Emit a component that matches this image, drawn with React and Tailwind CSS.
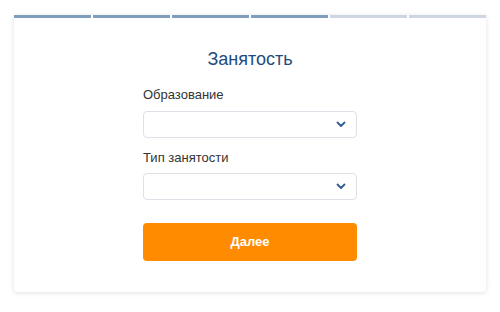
import React from "react";

const steps = [true, true, true, true, false, false];

const Chevron = () => (
  <svg width="10" height="7" viewBox="0 0 10 7" className="text-[#2d5d91]">
    <path d="M1.5 1.5 L5 5 L8.5 1.5" fill="none" stroke="currentColor" strokeWidth="1.8" strokeLinecap="round" strokeLinejoin="round" />
  </svg>
);

const Field = ({ label }) => (
  <div>
    <div className="text-[13px] leading-[16px] text-[#333] mb-[7.5px]">{label}</div>
    <div className="h-[27px] bg-white border border-[#dde2e8] rounded-[4px] flex items-center justify-end pr-[10px]">
      <Chevron />
    </div>
  </div>
);

const App = () => {
  return (
    <div className="w-[500px] h-[312px] bg-white pt-[15px] px-[14px]" style={{ fontFamily: "'Liberation Sans', Arial, sans-serif" }}>
      <div className="bg-white rounded-b-[4px] shadow-[0_1px_5px_rgba(0,0,0,0.12)] h-[277px]">
        {/* progress */}
        <div className="flex gap-[2px] h-[3px]">
          {steps.map((done, i) => (
            <div key={i} className={`flex-1 ${done ? "bg-[#7f9ebe]" : "bg-[#cdd6e2]"}`} />
          ))}
        </div>

        <div className="w-[214px] mx-auto">
          <h1 className="text-center text-[18px] leading-[22px] text-[#1f4c7d] pt-[30px] mb-[17px]">
            Занятость
          </h1>
          <div className="flex flex-col gap-[12px]">
            <Field label="Образование" />
            <Field label="Тип занятости" />
          </div>
          <button className="mt-[23px] w-full h-[38px] bg-[#ff8c00] rounded-[4px] text-white text-[13px] font-bold">
            Далее
          </button>
        </div>
      </div>
    </div>
  );
};

export default App;
